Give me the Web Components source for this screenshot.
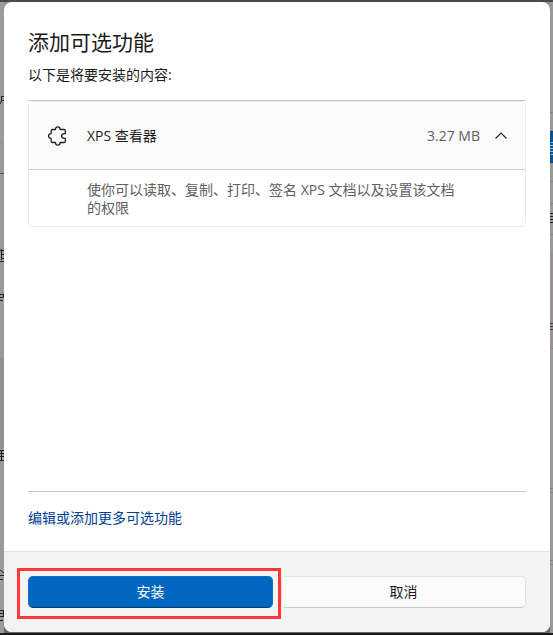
<!DOCTYPE html>
<html lang="zh-CN">
<head>
<meta charset="utf-8">
<meta name="viewport" content="width=device-width, initial-scale=1">
<title>添加可选功能</title>
<style>
  body {
    margin: 0;
    font: 14px/18px "Open Sans", "Noto Sans CJK SC", sans-serif;
    color: #1b1b1b;
  }
</style>
</head>
<body>

<settings-backdrop>
  <feature-dialog>
    <span slot="title">添加可选功能</span>
    <span slot="intro">以下是将要安装的内容:</span>

    <feature-card>
      <span slot="name">XPS 查看器</span>
      <span slot="size">3.27 MB</span>
      使你可以读取、复制、打印、签名 XPS 文档以及设置该文档的权限
    </feature-card>

    <a slot="more" href="#features">编辑或添加更多可选功能</a>
    <dialog-button slot="actions" primary marked>安装</dialog-button>
    <dialog-button slot="actions">取消</dialog-button>
  </feature-dialog>
</settings-backdrop>

<script>
/* Attach an open shadow root and fill it from a markup string */
function render(host, markup) {
  const template = document.createElement('template');
  template.innerHTML = markup;
  host.attachShadow({ mode: 'open' }).appendChild(template.content.cloneNode(true));
}


/* The dimmed settings window that stays visible around the dialog */
class SettingsBackdrop extends HTMLElement {
  constructor() {
    super();
    render(this, `
      <style>
        :host {
          display: grid;
          grid-template-columns: 4px minmax(0, 1fr) 3px;
          box-sizing: border-box;
          min-height: 100vh;
          border-top: 2px solid #4b494d;
          border-bottom: 2px solid #1b181e;
          background: #9b9b9b;
        }

        svg {
          display: block;
          width: 100%;
          height: 0;
          min-height: 100%;
        }

        .middle {
          display: flex;
          padding-bottom: 1px;
          background: linear-gradient(#8f8f8f 50%, #666569 50%);
        }

        ::slotted(*) { flex: 1; }
      </style>

      <svg aria-hidden="true">
        <rect width="4" height="631" fill="#9b9b9b"/>
        <path d="M0 140.500H4" stroke="#8d9093"/>
        <path d="M0 171.500H4" stroke="#555"/>
        <path d="M0 355H4V447H0z" fill="#929292"/>
        <path d="M1 94.500H4M1.500 94V99L0 102M1 98.500H4" stroke="#222" fill="none"/>
        <path d="M0 248.500H4M1.500 247V258M2 252.500H4M2 256.500H4M0 259.500H4" stroke="#222"/>
        <path d="M0 292.500H3M0 295.500H3.500M3.500 292V295M0 298.500H3" stroke="#222" fill="none"/>
        <path d="M0 448.500H4M0 451.500H4M0 454.500H4M1.500 448V459M0 458.500H4" stroke="#222"/>
        <path d="M0 568L4 571M0 573.500H4M0 577.500H3" stroke="#222"/>
        <path d="M0 608.500H4M0 611.500H4M0 614.500H4M0 618.500H3M3.500 608V614" stroke="#222"/>
      </svg>

      <div class="middle"><slot></slot></div>

      <svg aria-hidden="true">
        <rect width="3" height="631" fill="#999"/>
        <path d="M0 110.500H3M0 201.500H3M0 232.500H3M0 346.500H3" stroke="#858585"/>
        <path d="M0 129H3V160H0z" fill="#00549c"/>
        <path d="M0 129.500H3M0 160.500H3" stroke="#003f7b"/>
        <path d="M1 140.500H3M0 143.500H3M0 146.500H3M0 149.500H3M1 152.500H3" stroke="#aac0d0"/>
        <path d="M0 179V180H3V179z" fill="#8b8181"/>
        <path d="M0 211.500H3M0 214.500H3M0 217.500H3M0 220.500H3" stroke="#222"/>
        <path d="M0 251H3V345H0z" fill="#999191"/>
        <path d="M0 321.500H3M0 324.500H3M0 327.500H3" stroke="#444"/>
        <path d="M0 486.500H3M0 490.500H3M0 558.500H3M0 562.500H3" stroke="#858585"/>
      </svg>
    `);
  }
}


/* Dialog shell: heading, list, link and footer */
class FeatureDialog extends HTMLElement {
  constructor() {
    super();
    render(this, `
      <style>
        :host {
          display: flex;
          flex-direction: column;
          min-width: 0;
          overflow: hidden;
          border-radius: 8px;
          background: #fff;
        }

        main {
          flex: 1;
          display: flex;
          flex-direction: column;
          padding: 24px 24px 0;
        }

        h1 {
          margin: 0;
          font-size: 21px;
          line-height: 32px;
          font-weight: 400;
        }

        p {
          margin: 8px 0 16px;
        }

        .list {
          flex: 1;
          border-top: 1px solid #c8c8c8;
          border-bottom: 1px solid #c8c8c8;
        }

        .more {
          padding: 17px 0 24px;
        }

        ::slotted(a) {
          color: #003e92;
          text-decoration: none;
        }

        footer {
          display: flex;
          gap: 8px;
          padding: 24px;
          border-top: 1px solid #e3e3e3;
          background: #f3f3f3;
        }

        ::slotted(dialog-button) { flex: 1; }
      </style>

      <main>
        <h1><slot name="title"></slot></h1>
        <p><slot name="intro"></slot></p>
        <div class="list"><slot></slot></div>
        <div class="more"><slot name="more"></slot></div>
      </main>
      <footer><slot name="actions"></slot></footer>
    `);
  }

  connectedCallback() {
    this.setAttribute('role', 'dialog');
  }
}


/* One expandable feature */
class FeatureCard extends HTMLElement {
  constructor() {
    super();
    render(this, `
      <style>
        :host {
          display: block;
          border: 1px solid #eaeaea;
          border-radius: 5px;
          overflow: hidden;
        }

        button {
          display: flex;
          align-items: center;
          width: 100%;
          height: 68px;
          padding: 0 16px 0 18px;
          border: 0;
          border-bottom: 1px solid #cfcfcf;
          background: #fbfbfb;
          color: inherit;
          font: inherit;
          text-align: left;
        }

        svg {
          flex: none;
          fill: none;
          stroke: #222;
        }

        .name {
          flex: 1;
          margin-left: 20px;
        }

        .size {
          margin-right: 13px;
          color: #606060;
        }

        .details {
          padding: 11px 64px 9px 58px;
          color: #606060;
        }
      </style>

      <button type="button" aria-expanded="true" aria-controls="details">
        <svg width="20" height="20" viewBox="0 0 20 20" stroke-width="1.300" stroke-linejoin="round" aria-hidden="true">
          <path d="M5.500 3.500H8.500C8.500 1.700 9.400 .9 10.800 .9S13.100 1.700 13.100 3.500H17C17.900 3.500 18.400 4 18.400 4.800V7.700H17.300C15.700 7.700 14.600 8.600 14.600 10S15.700 12.400 17.300 12.400H18.400V15.200C18.400 16 17.900 16.500 17 16.500H13.100C13.100 18.300 12.200 19.100 10.800 19.100S8.500 18.300 8.500 16.500H5.500C4.700 16.500 4.200 16 4.200 15.200V12.400C2.400 12.400 1.600 11.500 1.600 10S2.400 7.700 4.200 7.700V4.800C4.200 4 4.700 3.500 5.500 3.500Z"/>
        </svg>
        <span class="name"><slot name="name"></slot></span>
        <span class="size"><slot name="size"></slot></span>
        <svg width="16" height="16" viewBox="0 0 16 16" stroke-width="1.200" aria-hidden="true">
          <path d="M2.500 10.500L8 5L13.500 10.500"/>
        </svg>
      </button>
      <div class="details" id="details"><slot></slot></div>
    `);

    /* Collapse or expand the description */
    const button = this.shadowRoot.querySelector('button');
    const details = this.shadowRoot.querySelector('.details');
    button.addEventListener('click', () => {
      details.hidden = !details.hidden;
      button.setAttribute('aria-expanded', String(!details.hidden));
    });
  }
}


/* Footer button. "primary" fills it blue, "marked" frames it in red. */
class DialogButton extends HTMLElement {
  constructor() {
    super();
    render(this, `
      <style>
        :host {
          display: block;
          position: relative;
        }

        button {
          display: block;
          width: 100%;
          height: 32px;
          padding: 0;
          border: 1px solid #e2e2e2;
          border-bottom-color: #c8c8c8;
          border-radius: 5px;
          background: #fbfbfb;
          color: inherit;
          font: inherit;
        }

        :host([primary]) button {
          border-color: #1070c4;
          border-bottom-color: #003e73;
          background: #0067c0;
          color: #fff;
        }

        :host([marked]) { z-index: 1; }

        /* The frame lies over the neighbouring content */
        :host([marked])::after {
          content: "";
          position: absolute;
          inset: -8px -8px -11px -11px;
          border: 3px solid #ff3737;
          pointer-events: none;
        }
      </style>

      <button type="button"><slot></slot></button>
    `);
  }
}


/* Register the elements */
customElements.define('settings-backdrop', SettingsBackdrop);
customElements.define('feature-dialog', FeatureDialog);
customElements.define('feature-card', FeatureCard);
customElements.define('dialog-button', DialogButton);
</script>
</body>
</html>
